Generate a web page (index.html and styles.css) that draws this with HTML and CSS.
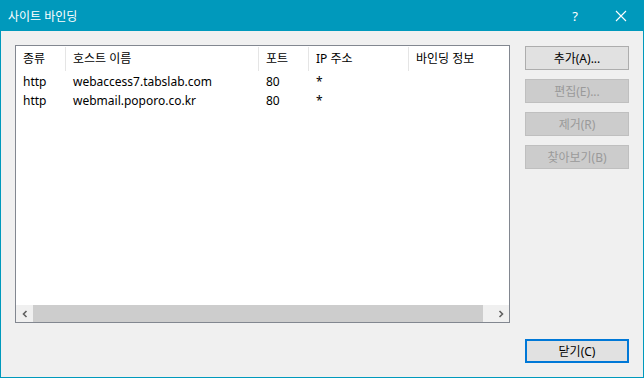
FILE: index.html
```html
<!DOCTYPE html>
<html>

<head>
    <meta charset="UTF-8">
    <title>사이트 바인딩</title>

    <link rel="stylesheet" href="styles.css">

</head>

<body>

    <div class="window">
        <div class="titlebar">
            <span class="title">사이트 바인딩</span>
            <span class="help">?</span>
            <span class="close">
                <svg width="12" height="12" viewBox="0 0 12 12">
                    <path d="M1 1 L11 11 M11 1 L1 11" stroke="#fff" stroke-width="1.1" fill="none" />
                </svg>
            </span>
        </div>

        <div class="client">
            <div class="main">
                <div class="listbox">
                    <div class="list-head">
                        <div class="col c1">종류</div>
                        <div class="col c2">호스트 이름</div>
                        <div class="col c3">포트</div>
                        <div class="col c4">IP 주소</div>
                        <div class="col c5">바인딩 정보</div>
                    </div>
                    <div class="list-body">
                        <div class="row">
                            <div class="col c1">http</div>
                            <div class="col c2">webaccess7.tabslab.com</div>
                            <div class="col c3">80</div>
                            <div class="col c4">*</div>
                            <div class="col c5"></div>
                        </div>
                        <div class="row">
                            <div class="col c1">http</div>
                            <div class="col c2">webmail.poporo.co.kr</div>
                            <div class="col c3">80</div>
                            <div class="col c4">*</div>
                            <div class="col c5"></div>
                        </div>
                    </div>
                    <div class="hscroll">
                        <div class="arrow">
                            <svg width="8" height="8" viewBox="0 0 8 8">
                                <path d="M5.5 1 L2.5 4 L5.5 7" stroke="#606060" stroke-width="1.6" fill="none" />
                            </svg>
                        </div>
                        <div class="thumb"></div>
                        <div class="track"></div>
                        <div class="arrow">
                            <svg width="8" height="8" viewBox="0 0 8 8">
                                <path d="M2.5 1 L5.5 4 L2.5 7" stroke="#606060" stroke-width="1.6" fill="none" />
                            </svg>
                        </div>
                    </div>
                </div>

                <div class="buttons">
                    <button class="btn">추가(A)...</button>
                    <button class="btn" disabled>편집(E)...</button>
                    <button class="btn" disabled>제거(R)</button>
                    <button class="btn" disabled>찾아보기(B)</button>
                </div>
            </div>

            <div class="footer">
                <button class="btn default">닫기(C)</button>
            </div>
        </div>
    </div>

</body>

</html>
```

FILE: styles.css
```css
html,
body {
    margin: 0;
    padding: 0;
}

body {
    font-family: "Noto Sans", "Noto Sans CJK KR", sans-serif;
    font-size: 12px;
    color: #000;
}

.window {
    width: 644px;
    height: 378px;
    box-sizing: border-box;
    border: 1px solid #0099bc;
    border-top: none;
    background-color: #f0f0f0;
    display: flex;
    flex-direction: column;
}

.titlebar {
    height: 31px;
    background-color: #0099bc;
    color: #fff;
    display: flex;
    align-items: center;
    padding-left: 8px;
    margin: 0 -1px;
}

.title {
    flex: 1;
    font-size: 12px;
}

.help {
    width: 46px;
    text-align: center;
    font-size: 13px;
    margin-right: 0;
}

.close {
    width: 46px;
    height: 31px;
    display: flex;
    align-items: center;
    justify-content: center;
}

.client {
    flex: 1;
    display: flex;
    flex-direction: column;
    padding: 14px 14px 14px 14px;
}

.main {
    display: flex;
    gap: 15px;
}

.listbox {
    width: 495px;
    height: 278px;
    box-sizing: border-box;
    border: 1px solid #828790;
    background-color: #fff;
    display: flex;
    flex-direction: column;
}

.list-head {
    display: flex;
    height: 25px;
    padding-top: 1px;
}

.list-head .col {
    border-right: 1px solid #e5e5e5;
    line-height: 23px;
    height: 24px;
}

.list-body {
    flex: 1;
}

.row {
    display: flex;
    height: 19px;
    line-height: 19px;
}

.col {
    box-sizing: border-box;
    padding-left: 7px;
    white-space: nowrap;
    overflow: hidden;
}

.c1 {
    width: 50px;
}

.c2 {
    width: 193px;
}

.c3 {
    width: 50px;
}

.c4 {
    width: 100px;
}

.c5 {
    width: 100px;
}

.list-head .c5 {
    border-right: none;
}

.hscroll {
    height: 17px;
    display: flex;
    background-color: #f0f0f0;
}

.arrow {
    width: 17px;
    display: flex;
    align-items: center;
    justify-content: center;
}

.thumb {
    width: 450px;
    background-color: #cdcdcd;
}

.track {
    flex: 1;
}

.buttons {
    display: flex;
    flex-direction: column;
    gap: 9px;
    padding-top: 1px;
}

.btn {
    width: 104px;
    height: 24px;
    box-sizing: border-box;
    font-family: "Noto Sans", "Noto Sans CJK KR", sans-serif;
    font-size: 12px;
    color: #000;
    background-color: #e1e1e1;
    border: 1px solid #adadad;
    padding: 0;
}

    .btn:disabled {
        background-color: #cccccc;
        border-color: #bfbfbf;
        color: #9a9a9a;
    }

    .btn.default {
        border: 2px solid #0078d7;
    }

.footer {
    margin-top: auto;
    display: flex;
    justify-content: flex-end;
}
```
